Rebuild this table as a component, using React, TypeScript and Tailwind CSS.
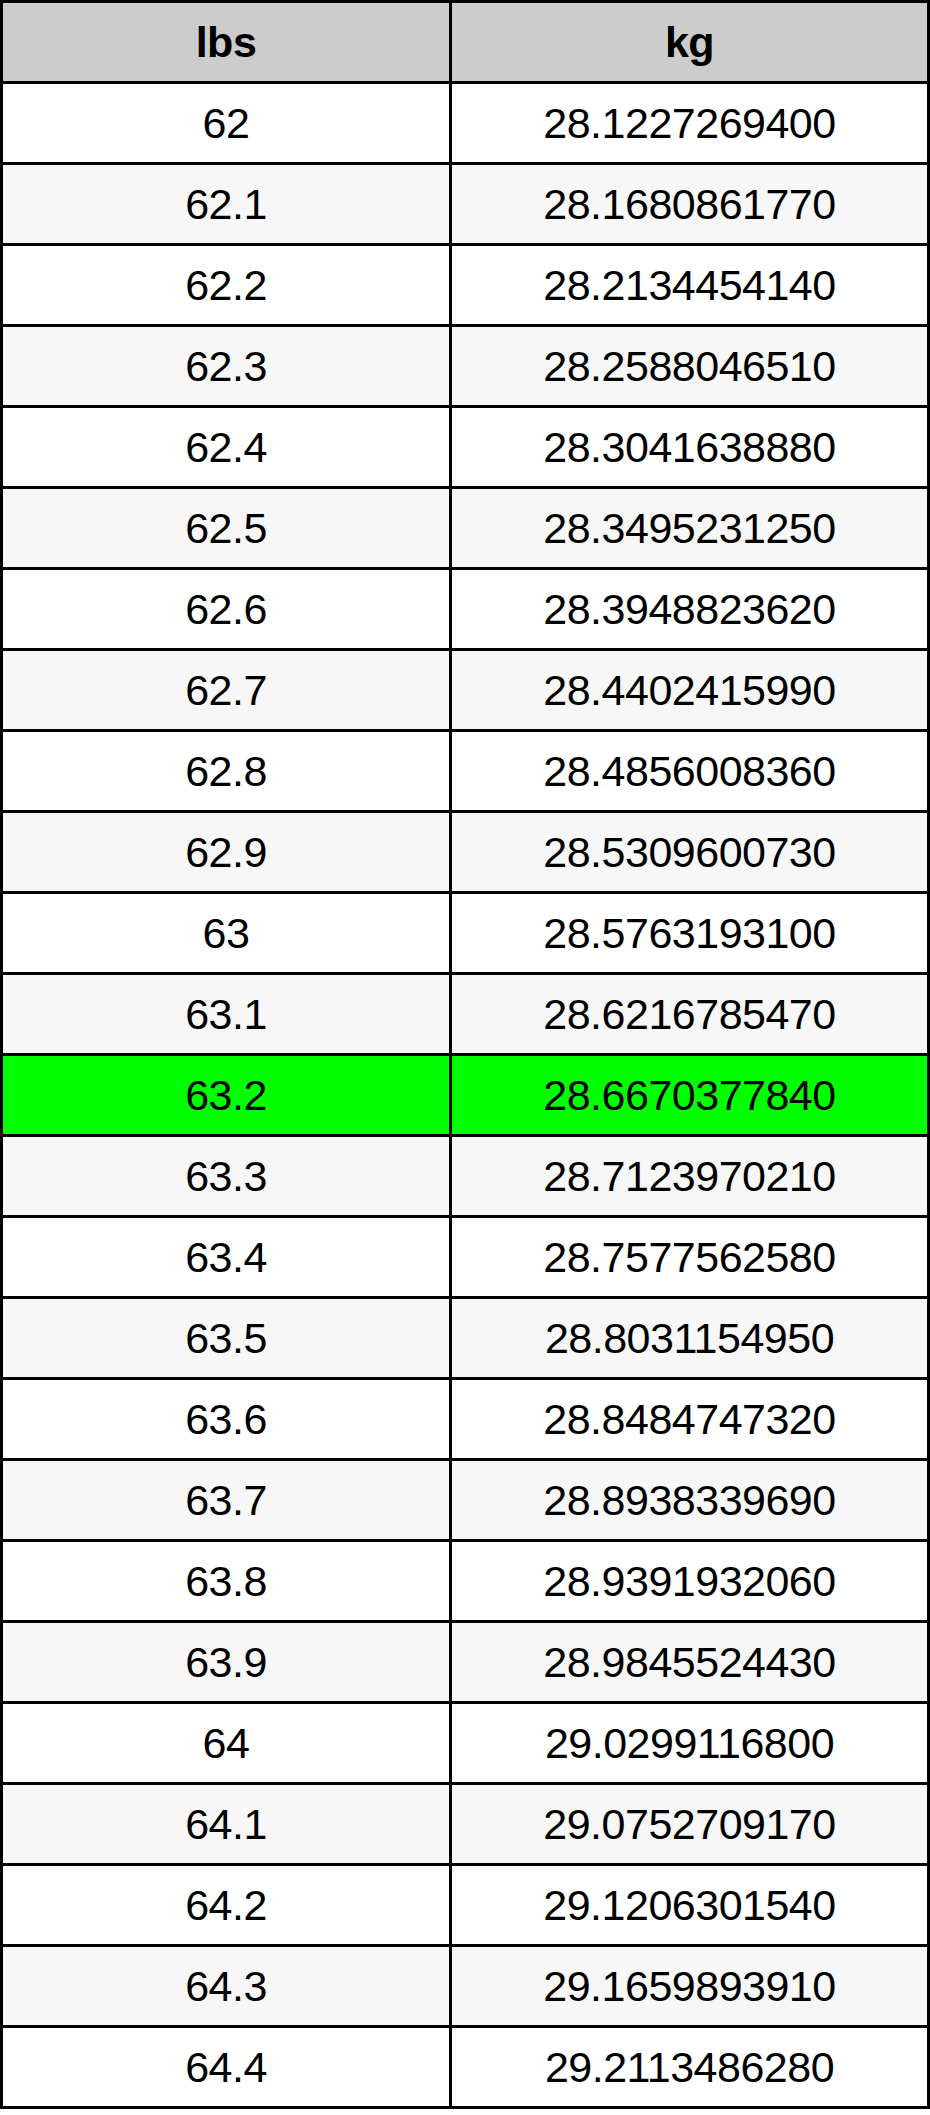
import React from "react";

const rows: [string, string][] = [
  ["62", "28.1227269400"],
  ["62.1", "28.1680861770"],
  ["62.2", "28.2134454140"],
  ["62.3", "28.2588046510"],
  ["62.4", "28.3041638880"],
  ["62.5", "28.3495231250"],
  ["62.6", "28.3948823620"],
  ["62.7", "28.4402415990"],
  ["62.8", "28.4856008360"],
  ["62.9", "28.5309600730"],
  ["63", "28.5763193100"],
  ["63.1", "28.6216785470"],
  ["63.2", "28.6670377840"],
  ["63.3", "28.7123970210"],
  ["63.4", "28.7577562580"],
  ["63.5", "28.8031154950"],
  ["63.6", "28.8484747320"],
  ["63.7", "28.8938339690"],
  ["63.8", "28.9391932060"],
  ["63.9", "28.9845524430"],
  ["64", "29.0299116800"],
  ["64.1", "29.0752709170"],
  ["64.2", "29.1206301540"],
  ["64.3", "29.1659893910"],
  ["64.4", "29.2113486280"],
];

export default function App() {
  return (
    <div
      className="w-[930px] bg-white text-black text-[43px] leading-none tracking-[-0.5px]"
      style={{ fontFamily: '"Liberation Sans", Arial, sans-serif' }}
    >
      <div className="border-[3px] border-black">
        <div className="flex h-[81px] border-b-[3px] border-black bg-[#cccccc] font-bold">
          <div className="w-[449px] border-r-[3px] border-black flex items-center justify-center">lbs</div>
          <div className="flex-1 flex items-center justify-center">kg</div>
        </div>
        {rows.map(([a, b], i) => {
          const last = i === rows.length - 1;
          const bg = a === "63.2" ? "bg-[#00ff00]" : i % 2 === 1 ? "bg-[#f7f7f7]" : "bg-white";
          return (
            <div
              key={a}
              className={`flex ${last ? "h-[78px]" : "h-[81px] border-b-[3px] border-black"} ${bg}`}
            >
              <div className="w-[449px] border-r-[3px] border-black flex items-center justify-center">{a}</div>
              <div className="flex-1 flex items-center justify-center">{b}</div>
            </div>
          );
        })}
      </div>
    </div>
  );
}
